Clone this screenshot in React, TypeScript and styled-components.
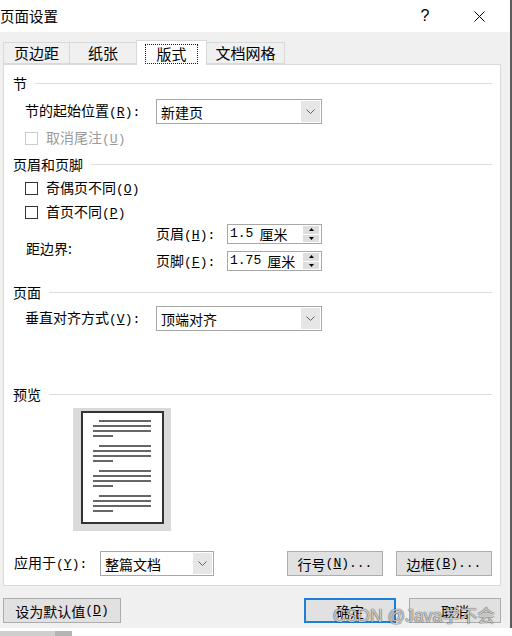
import React from "react";
import styled, { createGlobalStyle } from "styled-components";

const Global = createGlobalStyle`
  html, body { margin: 0; padding: 0; background: #fff; }
  body {
    width: 512px; height: 636px; overflow: hidden;
    font-family: "Noto Sans CJK SC", "Microsoft YaHei", sans-serif;
    font-size: 14px; color: #000;
  }
  * { box-sizing: border-box; }
`;

const Window = styled.div`
  position: relative;
  width: 512px;
  height: 636px;
  background: #fff;
`;

const Dialog = styled.div`
  width: 512px;
  height: 628px;
  background: #f0f0f0;
  border-right: 2px solid #5c5c5c;
  display: flex;
  flex-direction: column;
`;

const TitleBar = styled.div`
  height: 32px;
  background: #fff;
  display: flex;
  align-items: center;
  padding-right: 8px;
  gap: 8px;
`;

const Title = styled.div`
  flex: 1;
  font-size: 14.5px;
  line-height: 20px;
`;

const CaptionBtn = styled.div`
  width: 46px;
  height: 32px;
  display: flex;
  align-items: center;
  justify-content: center;
  font-family: "Liberation Sans", sans-serif;
  font-size: 16px;
  font-weight: 300;
`;

const Body = styled.div`
  padding: 8px 0 0 3px;
  display: flex;
  flex-direction: column;
`;

const TabStrip = styled.div`
  height: 24px;
  display: flex;
  align-items: flex-end;
`;

const Tab = styled.div<{ $w: number; $active?: boolean }>`
  width: ${(p) => p.$w}px;
  height: ${(p) => (p.$active ? 25 : 22)}px;
  margin-bottom: ${(p) => (p.$active ? -1 : 0)}px;
  margin-left: -1px;
  &:first-child { margin-left: 0; }
  position: relative;
  z-index: ${(p) => (p.$active ? 2 : 1)};
  background: ${(p) => (p.$active ? "#fff" : "#f0f0f0")};
  border: 1px solid #d9d9d9;
  border-bottom: ${(p) => (p.$active ? "none" : "1px solid #d9d9d9")};
  display: flex;
  align-items: center;
  justify-content: center;
  font-size: 15px;
  line-height: 18px;
`;

const FocusRect = styled.span`
  border: 1px dotted #222;
  padding: 0 10px;
  height: 20px;
  display: flex;
  align-items: center;
  margin-top: 1px;
`;

const Panel = styled.div`
  width: 498px;
  height: 522px;
  background: #fff;
  border: 1px solid #d9d9d9;
  padding: 0 8px 0 9px;
  display: flex;
  flex-direction: column;
`;

const Header = styled.div<{ $mt: number }>`
  margin-top: ${(p) => p.$mt}px;
  height: 16px;
  display: flex;
  align-items: center;
  line-height: 16px;
  &::after {
    content: "";
    flex: 1;
    height: 1px;
    margin-left: 8px;
    background: #dcdcdc;
  }
`;

const Row = styled.div<{ $mt: number; $indent?: number; $h?: number }>`
  margin-top: ${(p) => p.$mt}px;
  margin-left: ${(p) => p.$indent ?? 12}px;
  height: ${(p) => p.$h ?? 25}px;
  display: flex;
  align-items: center;
`;

const Label = styled.div<{ $w: number; $disabled?: boolean }>`
  width: ${(p) => p.$w}px;
  flex: none;
  white-space: nowrap;
  line-height: 18px;
  color: ${(p) => (p.$disabled ? "#9a9a9a" : "#000")};
`;

const Mono = styled.span`
  font-family: "Liberation Mono", monospace;
  font-size: 13px;
`;

const Select = styled.div<{ $w: number }>`
  width: ${(p) => p.$w}px;
  height: 25px;
  border: 1px solid #a8a8a8;
  background: #fff;
  display: flex;
  align-items: stretch;
`;

const SelectValue = styled.div`
  flex: 1;
  padding-left: 4px;
  display: flex;
  align-items: center;
  line-height: 18px;
`;

const DropBtn = styled.div`
  width: 19px;
  margin: 1px;
  background: #e6e6e6;
  display: flex;
  align-items: center;
  justify-content: center;
`;

const CheckRow = styled.div<{ $mt: number; $disabled?: boolean }>`
  margin-top: ${(p) => p.$mt}px;
  margin-left: 12px;
  height: 16px;
  display: flex;
  align-items: center;
  gap: 8px;
  color: ${(p) => (p.$disabled ? "#9a9a9a" : "#000")};
  line-height: 18px;
`;

const CheckBox = styled.span<{ $disabled?: boolean }>`
  width: 13px;
  height: 13px;
  flex: none;
  background: #fff;
  border: 1px solid ${(p) => (p.$disabled ? "#cccccc" : "#333")};
`;

const MarginBlock = styled.div`
  margin-top: 4px;
  margin-left: 13px;
  height: 47px;
  display: flex;
  align-items: center;
`;

const MarginCol = styled.div`
  display: flex;
  flex-direction: column;
  gap: 7px;
`;

const SpinRow = styled.div`
  height: 20px;
  display: flex;
  align-items: center;
`;

const Spinner = styled.div`
  width: 95px;
  height: 20px;
  border: 1px solid #a8a8a8;
  background: #fff;
  display: flex;
  align-items: stretch;
`;

const SpinValue = styled.div`
  flex: 1;
  padding-left: 2px;
  display: flex;
  align-items: center;
  gap: 6px;
  line-height: 16px;
  font-size: 14px;
`;

const SpinBtns = styled.div`
  width: 16px;
  margin: 1px 2px 1px 0;
  display: flex;
  flex-direction: column;
  gap: 1px;
`;

const SpinBtn = styled.div`
  flex: 1;
  background: #dedede;
  display: flex;
  align-items: center;
  justify-content: center;
`;

const PreviewBox = styled.div`
  margin-top: 6px;
  margin-left: 60px;
  width: 98px;
  height: 123px;
  background: #dadada;
  padding: 3px 7px 7px 8px;
  display: flex;
`;

const Button = styled.button<{ $w: number; $default?: boolean; $ml?: number }>`
  width: ${(p) => p.$w}px;
  height: 25px;
  flex: none;
  margin-left: ${(p) => p.$ml ?? 0}px;
  background: #e1e1e1;
  border: ${(p) => (p.$default ? "2px solid #1c7fd8" : "1px solid #adadad")};
  font-family: "Noto Sans CJK SC", sans-serif;
  font-size: 14px;
  line-height: 18px;
  color: #000;
  padding: 0;
  display: flex;
  align-items: center;
  justify-content: center;
`;

const Footer = styled.div`
  margin-top: 12px;
  width: 498px;
  display: flex;
  align-items: center;
  gap: 13px;
`;

const Spacer = styled.div`
  flex: 1;
`;

const BottomStrip = styled.div`
  margin-top: 3px;
  height: 5px;
  width: 72px;
  display: flex;
`;

const StripSeg = styled.div<{ $w: number; $c: string }>`
  width: ${(p) => p.$w}px;
  background: ${(p) => p.$c};
`;

const Watermark = styled.div`
  position: absolute;
  left: 333px;
  top: 604px;
  font-family: "Liberation Sans", "Noto Sans CJK SC", sans-serif;
  font-size: 17.5px;
  line-height: 24px;
  color: rgba(255, 255, 255, 0.75);
  text-shadow: 0 0 1px rgba(0, 0, 0, 0.65), 0 0 1px rgba(0, 0, 0, 0.65);
  white-space: nowrap;
  pointer-events: none;
`;

const Acc = ({ k, tail = "" }: { k: string; tail?: string }) => (
  <Mono>
    (<u>{k}</u>){tail}
  </Mono>
);

const Chevron = () => (
  <svg width="9" height="5" viewBox="0 0 9 5">
    <polyline points="0.5,0.5 4.5,4.5 8.5,0.5" fill="none" stroke="#606060" strokeWidth="1" />
  </svg>
);

const Tri = ({ up }: { up?: boolean }) => (
  <svg width="5" height="3" viewBox="0 0 5 3">
    <polygon points={up ? "0,3 5,3 2.5,0" : "0,0 5,0 2.5,3"} fill="#000" />
  </svg>
);

const PreviewPage = () => {
  const groups = [0, 25, 50, 75];
  return (
    <svg width="83" height="113" viewBox="0 0 83 113">
      <rect x="1" y="1" width="81" height="111" fill="#fff" stroke="#333" strokeWidth="2" />
      {groups.map((g) => (
        <g key={g} stroke="#333" strokeWidth="1.5">
          <line x1="18" x2="70" y1={10 + g} y2={10 + g} />
          <line x1="12" x2="70" y1={15 + g} y2={15 + g} />
          <line x1="12" x2="70" y1={20 + g} y2={20 + g} />
          <line x1="12" x2="32" y1={25 + g} y2={25 + g} />
        </g>
      ))}
    </svg>
  );
};

const CloseIcon = () => (
  <svg width="11" height="11" viewBox="0 0 11 11">
    <path d="M0.5 0.5 L10.5 10.5 M10.5 0.5 L0.5 10.5" stroke="#000" strokeWidth="1" />
  </svg>
);

const SpinBox = ({ value }: { value: string }) => (
  <Spinner>
    <SpinValue>
      <Mono>{value}</Mono>
      <span>厘米</span>
    </SpinValue>
    <SpinBtns>
      <SpinBtn>
        <Tri up />
      </SpinBtn>
      <SpinBtn>
        <Tri />
      </SpinBtn>
    </SpinBtns>
  </Spinner>
);

const Combo = ({ w, value }: { w: number; value: string }) => (
  <Select $w={w}>
    <SelectValue>{value}</SelectValue>
    <DropBtn>
      <Chevron />
    </DropBtn>
  </Select>
);

export default function App() {
  return (
    <Window>
      <Global />
      <Dialog>
        <TitleBar>
          <Title>页面设置</Title>
          <CaptionBtn>?</CaptionBtn>
          <CaptionBtn>
            <CloseIcon />
          </CaptionBtn>
        </TitleBar>
        <Body>
          <TabStrip>
            <Tab $w={67}>页边距</Tab>
            <Tab $w={68}>纸张</Tab>
            <Tab $w={71} $active>
              <FocusRect>版式</FocusRect>
            </Tab>
            <Tab $w={79}>文档网格</Tab>
          </TabStrip>
          <Panel>
            <Header $mt={10}>节</Header>
            <Row $mt={8}>
              <Label $w={131}>
                节的起始位置<Acc k="R" tail=":" />
              </Label>
              <Combo w={166} value="新建页" />
            </Row>
            <CheckRow $mt={6} $disabled>
              <CheckBox $disabled />
              <span>
                取消尾注<Acc k="U" />
              </span>
            </CheckRow>

            <Header $mt={10}>页眉和页脚</Header>
            <CheckRow $mt={8}>
              <CheckBox />
              <span>
                奇偶页不同<Acc k="O" />
              </span>
            </CheckRow>
            <CheckRow $mt={8}>
              <CheckBox />
              <span>
                首页不同<Acc k="P" />
              </span>
            </CheckRow>
            <MarginBlock>
              <Label $w={130}>距边界:</Label>
              <MarginCol>
                <SpinRow>
                  <Label $w={71}>
                    页眉<Acc k="H" tail=":" />
                  </Label>
                  <SpinBox value="1.5" />
                </SpinRow>
                <SpinRow>
                  <Label $w={71}>
                    页脚<Acc k="F" tail=":" />
                  </Label>
                  <SpinBox value="1.75" />
                </SpinRow>
              </MarginCol>
            </MarginBlock>

            <Header $mt={13}>页面</Header>
            <Row $mt={6}>
              <Label $w={131}>
                垂直对齐方式<Acc k="V" tail=":" />
              </Label>
              <Combo w={166} value="顶端对齐" />
            </Row>

            <Header $mt={55}>预览</Header>
            <PreviewBox>
              <PreviewPage />
            </PreviewBox>

            <Row $mt={20} $indent={1}>
              <Label $w={86}>
                应用于<Acc k="Y" tail=":" />
              </Label>
              <Combo w={114} value="整篇文档" />
              <Spacer />
              <Button $w={96}>
                行号<Acc k="N" tail="..." />
              </Button>
              <Button $w={96} $ml={13}>
                边框<Acc k="B" tail="..." />
              </Button>
            </Row>
          </Panel>
          <Footer>
            <Button $w={118}>
              设为默认值<Acc k="D" />
            </Button>
            <Spacer />
            <Button $w={92} $default>
              确定
            </Button>
            <Button $w={92}>取消</Button>
          </Footer>
        </Body>
      </Dialog>
      <BottomStrip>
        <StripSeg $w={55} $c="#cfcfcf" />
        <StripSeg $w={17} $c="#b4b4b4" />
      </BottomStrip>
      <Watermark>CSDN @Java学不会</Watermark>
    </Window>
  );
}
